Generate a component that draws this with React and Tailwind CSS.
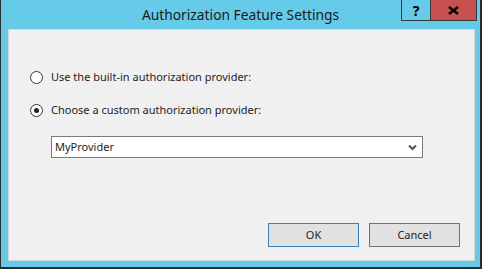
export default function App() {
  const font = { fontFamily: '"Noto Sans", "Open Sans", Arial, sans-serif' };
  return (
    <div className="w-[484px] h-[269px] bg-white" style={font}>
      <div className="flex h-[269px] w-[482px] flex-col border-b-2 border-l border-r-2 border-[#2b2b2b] bg-[#66cbe9]">
        {/* title bar */}
        <div className="relative flex h-[29px] items-center justify-center">
          <span className="text-[13.8px] leading-none text-[#1a1a1a]">
            Authorization Feature Settings
          </span>
          <div className="absolute right-[3px] top-0 flex h-[21px]">
            <div className="flex w-[29px] items-center justify-center border-b border-l border-[#3a3a3a] text-[14px] font-bold text-black">
              ?
            </div>
            <div className="flex w-[47px] items-center justify-center border-b border-l border-r border-[#3a3a3a] bg-[#c75050]">
              <svg width="11" height="9" viewBox="0 0 11 9">
                <path d="M1 1 L10 8 M10 1 L1 8" stroke="#000" strokeWidth="2.4" />
              </svg>
            </div>
          </div>
        </div>

        {/* content */}
        <div className="mb-[6px] ml-[7px] mr-[5px] flex flex-1 flex-col border border-[#d4d4d4] bg-[#f0f0f0] pl-[21px] pr-[14px] pb-[13px] text-[11px] text-[#1e1e1e]">
          <label className="mt-[39px] flex h-[16px] items-center gap-[8px]">
            <span className="h-[13px] w-[13px] rounded-full border border-[#333] bg-white" />
            <span>Use the built-in authorization provider:</span>
          </label>
          <label className="mt-[17px] flex h-[16px] items-center gap-[8px]">
            <span className="flex h-[13px] w-[13px] items-center justify-center rounded-full border border-[#333] bg-white">
              <span className="h-[5px] w-[5px] rounded-full bg-[#222]" />
            </span>
            <span>Choose a custom authorization provider:</span>
          </label>

          <div className="mt-[18px] ml-[21px] flex h-[22px] w-[372px] items-center justify-between border border-[#7a7a7a] bg-white pl-[3px] pr-[5px]">
            <span>MyProvider</span>
            <svg width="9" height="7" viewBox="0 0 9 7">
              <path d="M1 1.5 L4.5 5 L8 1.5" fill="none" stroke="#555" strokeWidth="2" />
            </svg>
          </div>

          <div className="mt-auto flex justify-end gap-[10px]">
            <button className="h-[24px] w-[91px] border border-[#3c7fb1] bg-[#e1e1e1] text-[11px] text-[#1e1e1e]">
              OK
            </button>
            <button className="h-[24px] w-[91px] border border-[#707070] bg-[#e1e1e1] text-[11px] text-[#1e1e1e]">
              Cancel
            </button>
          </div>
        </div>
      </div>
    </div>
  );
}
